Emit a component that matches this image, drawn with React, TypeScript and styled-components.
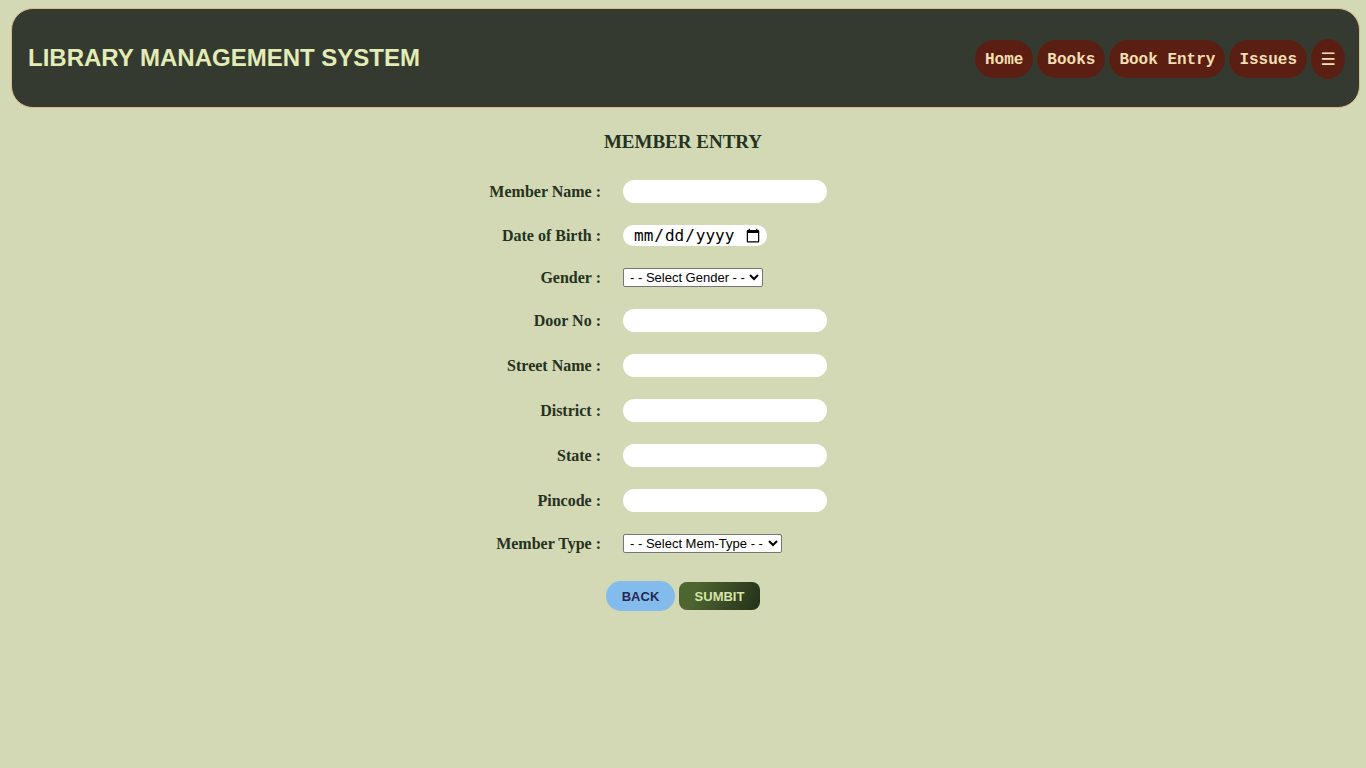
import React from "react";
import styled, { createGlobalStyle } from "styled-components";

// ─── Global ──────────────────────────────────────────────────────────────────
const GlobalStyle = createGlobalStyle`
  html, body {
    margin: 0;
    padding: 0;
    background: #d3d9b4;
    font-family: "Liberation Serif", "Times New Roman", serif;
  }
  * { box-sizing: border-box; }
`;

// ─── Header ──────────────────────────────────────────────────────────────────
const Header = styled.header`
  margin: 8px 6px 0 11px;
  height: 100px;
  background: #343a30;
  border: 1px solid #deb887;
  border-radius: 22px;
  display: flex;
  align-items: center;
  justify-content: space-between;
  padding: 0 14px 0 16px;
`;

const Brand = styled.h1`
  margin: 0;
  font-family: "Liberation Sans", Arial, sans-serif;
  font-size: 24px;
  font-weight: 700;
  color: #e2ecb4;
`;

const Nav = styled.nav`
  display: flex;
  align-items: center;
  gap: 4px;
  padding-top: 1px;
`;

const NavButton = styled.a`
  display: inline-flex;
  align-items: center;
  height: 38px;
  padding: 2px 10px 0;
  background: #5a1f12;
  color: #f5deb3;
  border-radius: 19px;
  font-family: "Liberation Mono", "Courier New", monospace;
  font-size: 16px;
  font-weight: 700;
  text-decoration: none;
  cursor: pointer;
`;

const MenuButton = styled(NavButton)`
  width: 34px;
  height: 40px;
  padding: 0;
  justify-content: center;
  border-radius: 50%;
  font-family: "DejaVu Sans", sans-serif;
  font-size: 17px;
  font-weight: 700;
`;

// ─── Form ────────────────────────────────────────────────────────────────────
const Main = styled.main`
  display: flex;
  flex-direction: column;
  align-items: center;
  padding-top: 23px;
`;

const Title = styled.h2`
  margin: 0 0 27px;
  font-size: 19px;
  font-weight: 700;
  color: #25321f;
`;

const Form = styled.form`
  display: grid;
  grid-template-columns: 180px 322px;
  column-gap: 22px;
  row-gap: 22px;
  align-items: center;
`;

const Label = styled.label`
  text-align: right;
  font-size: 16px;
  font-weight: 700;
  color: #25321f;
`;

const TextInput = styled.input`
  width: 204px;
  height: 23px;
  border: none;
  border-radius: 12px;
  background: #fff;
  padding: 0 10px;
  outline: none;
`;

const DateInput = styled.input`
  width: 144px;
  height: 21px;
  border: none;
  border-radius: 11px;
  background: #fff;
  padding: 0 4px 0 10px;
  font-family: "DejaVu Sans Mono", monospace;
  font-size: 16px;
  color: #000;
`;

const Select = styled.select<{ w: number }>`
  width: ${(p) => p.w}px;
  height: 19px;
  font-family: "Liberation Sans", Arial, sans-serif;
  font-size: 13px;
  border: 1px solid #767676;
  border-radius: 2px;
  background: #fff;
  padding: 0 0 0 2px;
`;

const Actions = styled.div`
  display: flex;
  align-items: center;
  gap: 4px;
  margin-top: 28px;
`;

const Button = styled.button`
  font-family: "Liberation Sans", Arial, sans-serif;
  font-size: 13px;
  font-weight: 700;
  border: none;
  cursor: pointer;
`;

const BackButton = styled(Button)`
  width: 69px;
  height: 30px;
  border-radius: 15px;
  background: #82bbec;
  color: #27284f;
`;

const SubmitButton = styled(Button)`
  width: 81px;
  height: 28px;
  border-radius: 8px;
  background: linear-gradient(110deg, #4e6530 20%, #24301b 100%);
  color: #d9e4a6;
`;

// ─── Component ───────────────────────────────────────────────────────────────
const textFields = ["Door No", "Street Name", "District", "State", "Pincode"];

const App: React.FC = () => {
  return (
    <>
      <GlobalStyle />
      <Header>
        <Brand>LIBRARY MANAGEMENT SYSTEM</Brand>
        <Nav>
          <NavButton>Home</NavButton>
          <NavButton>Books</NavButton>
          <NavButton>Book Entry</NavButton>
          <NavButton>Issues</NavButton>
          <MenuButton>☰</MenuButton>
        </Nav>
      </Header>

      <Main>
        <Title>MEMBER ENTRY</Title>
        <Form onSubmit={(e) => e.preventDefault()}>
          <Label>Member Name :</Label>
          <div><TextInput type="text" /></div>

          <Label>Date of Birth :</Label>
          <div><DateInput type="date" /></div>

          <Label>Gender :</Label>
          <div>
            <Select w={140} defaultValue="">
              <option value="">- - Select Gender - -</option>
              <option>Male</option>
              <option>Female</option>
            </Select>
          </div>

          {textFields.map((f) => (
            <React.Fragment key={f}>
              <Label>{f} :</Label>
              <div><TextInput type="text" /></div>
            </React.Fragment>
          ))}

          <Label>Member Type :</Label>
          <div>
            <Select w={159} defaultValue="">
              <option value="">- - Select Mem-Type - -</option>
              <option>Student</option>
              <option>Staff</option>
            </Select>
          </div>
        </Form>
        <Actions>
          <BackButton type="button">BACK</BackButton>
          <SubmitButton type="submit">SUMBIT</SubmitButton>
        </Actions>
      </Main>
    </>
  );
};

export default App;
